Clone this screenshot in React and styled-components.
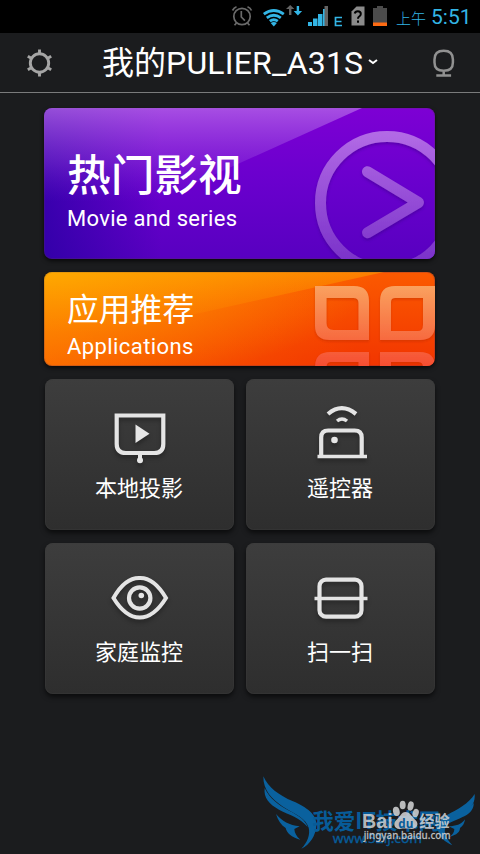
import React from 'react';
import styled, { createGlobalStyle, css } from 'styled-components';

const Global = createGlobalStyle`
  * { box-sizing: border-box; }
  body { margin: 0; background: #1b1c1e; }
`;

const Screen = styled.div`
  position: relative;
  width: 480px;
  height: 854px;
  overflow: hidden;
  background: #1b1c1e;
  color: #fff;
  font-family: Roboto, "Noto Sans CJK SC", sans-serif;
`;

const StatusBar = styled.div`
  height: 33px;
  background: #000;
  display: flex;
  justify-content: flex-end;
`;

const StatusIcons = styled.svg`
  display: block;
  width: 170px;
  height: 33px;
`;

const Clock = styled.div`
  display: flex;
  align-items: baseline;
  width: 85px;
  padding-left: 1px;
  color: #33b5e5;
  white-space: nowrap;
  line-height: 34px;
`;

const Meridiem = styled.span`
  width: 35px;
  font-size: 15px;
  font-weight: 300;
`;

const Time = styled.span`
  font-size: 21px;
`;

const Header = styled.header`
  height: 60px;
  display: flex;
  align-items: center;
  border-bottom: 1px solid #7a7b7c;
`;

const HeaderIcon = styled.svg`
  flex: none;
  display: block;
  width: 80px;
  height: 60px;
`;

const Title = styled.h1`
  flex: 1;
  display: flex;
  align-items: center;
  margin: 0;
  padding-left: 22px;
  font-size: 32px;
  font-weight: 400;
  line-height: 58px;
  white-space: nowrap;
`;

const DeviceName = styled.span`
  letter-spacing: ${(p) => p.$spacing || 0}px;
`;

const Chevron = styled.svg`
  display: block;
  width: 12px;
  height: 12px;
  margin: -2px 0 0 4px;
`;

const Content = styled.main`
  display: flex;
  flex-direction: column;
  gap: 13px;
  width: 391px;
  margin: 15px 0 0 44px;
`;

const surfaces = {
  movie: css`
    height: 151px;
    background:
      linear-gradient(to right, rgba(20, 0, 150, 0.55), rgba(20, 0, 150, 0) 30%),
      linear-gradient(#7d00d4, #6900cd 50%, #5800c0);
  `,
  apps: css`
    height: 94px;
    background:
      radial-gradient(ellipse 330px 115px at 0 0, rgba(255, 185, 0, 0.6), rgba(255, 170, 0, 0)),
      linear-gradient(to right, rgba(255, 125, 0, 0.65), rgba(255, 110, 0, 0) 80%),
      linear-gradient(#fb5a00, #f23500);
  `,
};

const Banner = styled.section`
  position: relative;
  overflow: hidden;
  border-radius: 8px;
  box-shadow: 0 2px 4px rgba(0, 0, 0, 0.7), inset 0 0 0 1px rgba(90, 50, 80, 0.25);
  padding-left: 23px;
  ${(p) => surfaces[p.$kind]}
`;

const BannerArt = styled.svg`
  position: absolute;
  inset: 0;
  width: 391px;
  height: ${(p) => p.$height}px;
`;

const BannerTitle = styled.h2`
  position: relative;
  margin: ${(p) => p.$top}px 0 0;
  font-size: ${(p) => p.$size}px;
  line-height: ${(p) => p.$line}px;
  font-weight: ${(p) => p.$weight || 400};
`;

const BannerSubtitle = styled.p`
  position: relative;
  margin: 0;
  font-size: 22px;
  line-height: 26px;
  letter-spacing: ${(p) => p.$spacing}px;
  white-space: nowrap;
`;

const TileGrid = styled.div`
  display: grid;
  grid-template-columns: 189px 189px;
  grid-auto-rows: 151px;
  column-gap: 12px;
  row-gap: 13px;
  padding-left: 1px;
`;

const TileBox = styled.section`
  display: flex;
  flex-direction: column;
  align-items: center;
  border-radius: 8px;
  background: linear-gradient(#3d3d3d, #2e2e2e);
  box-shadow: 0 3px 5px rgba(0, 0, 0, 0.6), inset 0 0 0 1px rgba(60, 60, 60, 0.4);
`;

const TileIcon = styled.svg`
  display: block;
  width: 80px;
  height: 95px;
  fill: none;
  stroke: #e4e4e4;
  stroke-width: 4.2;
  filter: drop-shadow(0 3px 2px rgba(0, 0, 0, 0.3));
`;

const TileLabel = styled.span`
  margin-left: -1px;
  font-size: 22px;
  line-height: 30px;
`;

const Watermark = styled.svg`
  position: absolute;
  left: 255px;
  top: 765px;
  width: 225px;
  height: 89px;
`;

function SystemIcons() {
  return (
    <StatusIcons viewBox="225 0 170 33">
      <g fill="none" stroke="#6a6a6a" strokeWidth="1.7">
        <circle cx="242" cy="16.5" r="8.2" />
        <path d="M241.3 11v6l3.6 3.6M232.5 10.5q1.5-3 4-3.8M247.5 6.7q3 1.2 4 3.8M236.5 23l-2 2.3M247.5 23l2 2.3" />
      </g>
      <g fill="none" stroke="#33b5e5" strokeWidth="2.8">
        <path d="M263.8 14.2q10-7.4 20 0M266.8 17.8q7-5.2 14 0M269.8 21.2q4-3 8 0" />
      </g>
      <path d="M270.7 23q3.1-2 6.2 0l-3.1 3.5z" fill="#33b5e5" />
      <path d="M289 15V9h-3l4.2-4 4.2 4h-3v6z" fill="#646464" />
      <path d="M296.7 6v5h-3l4.2 4.4 4.2-4.4h-3V6z" fill="#33b5e5" />
      <path d="M308 22h4v4h-4zM313 18.500h4.500V26H313zM318 14h4.500v12H318zM323 9h4v17h-4z" fill="#33b5e5" />
      <path d="M324.500 6h3.500v20h-3.500z" fill="#646464" />
      <path d="M342 17.500h-6.500v8h6.500M335.500 21.500h6" fill="none" stroke="#33b5e5" strokeWidth="1.7" />
      <path d="M351.500 11.500l5-5h8v19h-13z" fill="#8b8b8b" />
      <path d="M354.700 13.500q.5-2.300 3.100-2.300 3 0 3 2.700 0 1.500-1.600 2.600-1.200.8-1.200 2.200M358 20.500v2.200" fill="none" stroke="#000" strokeWidth="2" />
      <path d="M373 8h4V6h6v2h4v18h-14z" fill="#4b4b4b" />
      <path d="M373 22.500h14V26h-14z" fill="#ff6b13" />
    </StatusIcons>
  );
}

function GearIcon() {
  const spokes = [0, 60, 120, 180, 240, 300];
  return (
    <HeaderIcon viewBox="0 33 80 60">
      <g fill="none" stroke="#a5a5a5" strokeWidth="2.9">
        <circle cx="39.5" cy="63" r="9.2" />
        {spokes.map((angle) => (
          <path key={angle} d="M39.5 54v-4.5" transform={`rotate(${angle} 39.5 63)`} />
        ))}
      </g>
    </HeaderIcon>
  );
}

function MicIcon() {
  return (
    <HeaderIcon viewBox="400 33 80 60">
      <g fill="none" stroke="#919191" strokeWidth="2.5">
        <path d="M434.500 59.500q0-8.700 9.200-8.700t9.200 8.700v3q0 8.300-9.200 8.300t-9.200-8.300zM443.700 71v4.500M436.300 75.500h14.800" />
      </g>
    </HeaderIcon>
  );
}

function MovieArt() {
  return (
    <BannerArt $height={151} viewBox="44 108 391 151">
      <defs>
        <linearGradient id="movieGloss" x1="0" y1="0" x2="0" y2="1">
          <stop offset="0" stopColor="#bb73ea" stopOpacity=".68" />
          <stop offset=".5" stopColor="#a055e2" stopOpacity=".3" />
          <stop offset=".85" stopColor="#8030d8" stopOpacity="0" />
        </linearGradient>
        <linearGradient id="playInk" gradientUnits="userSpaceOnUse" x1="0" y1="131" x2="0" y2="259">
          <stop offset="0" stopColor="#b36be6" />
          <stop offset="1" stopColor="#7b33ca" />
        </linearGradient>
        <filter id="playShadow" x="-10%" y="-10%" width="120%" height="125%">
          <feDropShadow dx="0" dy="2" stdDeviation="1.5" floodColor="#300080" floodOpacity=".45" />
        </filter>
      </defs>
      <path d="M44 108h318L118 218H44z" fill="url(#movieGloss)" />
      <g fill="none" stroke="url(#playInk)" filter="url(#playShadow)">
        <circle cx="387" cy="203" r="66.5" strokeWidth="11" />
        <path d="M367.500 171.700L418.500 202.500L367.500 232.700" strokeWidth="11" strokeLinecap="round" strokeLinejoin="round" />
      </g>
    </BannerArt>
  );
}

function AppsArt() {
  return (
    <BannerArt $height={94} viewBox="44 272 391 94">
      <defs>
        <linearGradient id="appsGloss" x1="0" y1="0" x2="0" y2="1">
          <stop offset="0" stopColor="#ffbd00" stopOpacity=".4" />
          <stop offset=".8" stopColor="#ff9800" stopOpacity="0" />
        </linearGradient>
        <linearGradient id="tileInk" gradientUnits="userSpaceOnUse" x1="0" y1="286" x2="0" y2="366">
          <stop offset="0" stopColor="#faa15e" />
          <stop offset=".66" stopColor="#f76b40" />
          <stop offset="1" stopColor="#f64e32" />
        </linearGradient>
        <filter id="tileShadow" x="-10%" y="-10%" width="120%" height="125%">
          <feDropShadow dx="0" dy="1.5" stdDeviation="1.2" floodColor="#b02000" floodOpacity=".4" />
        </filter>
      </defs>
      <path d="M44 272h340L44 348z" fill="url(#appsGloss)" />
      <g fill="url(#tileInk)" fillRule="evenodd" filter="url(#tileShadow)">
        <path d="M315 286h39q15 0 15 15v39h-39q-15 0-15-14zM326.500 298v25q0 7 7 7h25v-27q0-5-5-5z" />
        <path d="M395 286h40v39q0 15-15 15h-40v-39q0-15 15-15zM395 298q-4 0-4 4v29h27q5 0 5-6v-27z" />
        <path d="M330 352h39v40h-54v-25q0-15 15-15zM331 362q-4.500 0-4.500 5v25h32v-30z" />
        <path d="M380 352h40q15 0 15 15v25h-55zM391 362v30h32v-25q0-5-5-5z" />
      </g>
    </BannerArt>
  );
}

const tiles = [
  {
    label: '本地投影',
    icon: (
      <>
        <path d="M16.700 36.500H63.300V65q0 9-9 9H25.700q-9 0-9-9z" />
        <path d="M40 75v7" strokeWidth="4" />
        <circle cx="40" cy="81.2" r="3" fill="#e6e6e6" stroke="none" />
        <path d="M35.500 45.500v18.500L49.500 54.700z" fill="#e6e6e6" stroke="none" />
      </>
    ),
  },
  {
    label: '遥控器',
    icon: (
      <>
        <path d="M20.200 77V58.500q0-7 7-7h26.500q7 0 7 7V77" />
        <path d="M16.500 77.500h49.500" strokeWidth="3.5" />
        <circle cx="33.5" cy="61" r="3.3" fill="#e6e6e6" stroke="none" />
        <path d="M27 35q13.700-11.600 28 0" />
        <path d="M36 42q5-4 10 0" strokeWidth="3.5" />
      </>
    ),
  },
  {
    label: '家庭监控',
    icon: (
      <>
        <path d="M13.500 55Q25 34.500 39.700 35Q54 34.500 66 55Q54 74.500 39.700 74.500T13.500 55z" strokeWidth="4" />
        <circle cx="39.7" cy="55" r="10.7" />
        <circle cx="41.3" cy="52.5" r="2.8" fill="#e6e6e6" stroke="none" />
      </>
    ),
  },
  {
    label: '扫一扫',
    icon: (
      <>
        <rect x="18.5" y="36.7" width="42" height="37" rx="6.5" />
        <path d="M13.500 55.500h53" strokeWidth="3.6" />
      </>
    ),
  },
];

function Tile({ label, icon }) {
  return (
    <TileBox>
      <TileIcon viewBox="0 0 80 95">{icon}</TileIcon>
      <TileLabel>{label}</TileLabel>
    </TileBox>
  );
}

function SiteMark() {
  return (
    <Watermark viewBox="0 0 675 267">
      <g fill="#0a619e">
        <path d="M25 34C40 67 71 91 114 109C155 126 187 150 184 182C182 211 166 238 139 251C158 231 166 208 161 188C153 159 121 148 84 125C51 104 24 75 25 34z" />
        <path d="M29 69C44 101 71 121 104 138C133 153 151 166 158 186C133 156 104 151 72 134C43 118 25 98 29 69z" />
        <path d="M63 147C81 168 103 181 134 184L118 192C119 204 124 214 136 224C109 217 95 204 92 189C78 180 69 166 63 147z" />
        <path d="M659 87C641 116 608 133 576 150C552 163 542 183 552 205C559 223 574 233 592 241C572 218 565 202 572 186C581 168 607 159 630 143C651 128 661 110 659 87z" />
        <path d="M656 114C635 140 601 146 579 166C569 175 568 182 575 180C588 170 610 163 628 154C648 143 657 130 656 114z" />
        <path d="M630 163C620 178 601 184 581 184L598 192C598 202 593 208 584 215C606 210 615 200 615 189C624 183 629 174 630 163z" />
      </g>
      <g fill="#075b98" fontFamily='"Noto Sans CJK SC", sans-serif' fontWeight="700">
        <text x="172" y="192" fontSize="66" textLength="384" lengthAdjust="spacingAndGlyphs">我爱IT技术网</text>
        <text x="233" y="233" fontSize="37" fontWeight="400" fontFamily='"Noto Sans", sans-serif' stroke="#075b98" textLength="268" lengthAdjust="spacingAndGlyphs">www.52ij.com</text>
      </g>
      <g fill="#d8d9da" fillOpacity=".84">
        <g fontFamily='"Liberation Sans", "Noto Sans CJK SC", sans-serif'>
          <text x="321" y="189" fontSize="62" fontWeight="700" textLength="92" lengthAdjust="spacingAndGlyphs">Bai</text>
          <text x="493" y="186" fontSize="47" fontWeight="700" textLength="91" lengthAdjust="spacingAndGlyphs">经验</text>
          <text x="326" y="222" fontSize="30" fontWeight="500" fontFamily='"Noto Sans", sans-serif' stroke="#d8d9da" strokeOpacity=".5" textLength="261" lengthAdjust="spacingAndGlyphs">jingyan.baidu.com</text>
        </g>
        <ellipse cx="424" cy="139" rx="10" ry="14" transform="rotate(-12 424 139)" />
        <ellipse cx="443" cy="120" rx="9" ry="13" />
        <ellipse cx="467" cy="123" rx="9" ry="14" transform="rotate(12 467 123)" />
        <ellipse cx="482" cy="144" rx="9" ry="13" transform="rotate(18 482 144)" />
        <path d="M451 141C439 141 435 156 424 165C414 173 416 191 433 192C447 190 458 190 469 192C488 192 492 176 482 166C471 156 466 141 451 141z" />
      </g>
      <text x="430" y="188" fill="#075b98" fontFamily='"Open Sans", sans-serif' fontSize="35" fontWeight="700">du</text>
    </Watermark>
  );
}

export default function App() {
  return (
    <Screen>
      <Global />
      <StatusBar>
        <SystemIcons />
        <Clock>
          <Meridiem>上午</Meridiem>
          <Time>5:51</Time>
        </Clock>
      </StatusBar>
      <Header>
        <GearIcon />
        <Title>
          <DeviceName>我的</DeviceName>
          <DeviceName $spacing={0.2}>PULIER_A31S</DeviceName>
          <Chevron viewBox="0 0 12 12">
            <path d="M2 4l4 3 4-3" fill="none" stroke="#fff" strokeWidth="2" />
          </Chevron>
        </Title>
        <MicIcon />
      </Header>
      <Content>
        <Banner $kind="movie">
          <MovieArt />
          <BannerTitle $top={38} $size={43.7} $line={60} $weight={500}>热门影视</BannerTitle>
          <BannerSubtitle $spacing={0.3}>Movie and series</BannerSubtitle>
        </Banner>
        <Banner $kind="apps">
          <AppsArt />
          <BannerTitle $top={15} $size={31.8} $line={47}>应用推荐</BannerTitle>
          <BannerSubtitle $spacing={0.42}>Applications</BannerSubtitle>
        </Banner>
        <TileGrid>
          {tiles.map((tile) => (
            <Tile key={tile.label} {...tile} />
          ))}
        </TileGrid>
      </Content>
      <SiteMark />
    </Screen>
  );
}
